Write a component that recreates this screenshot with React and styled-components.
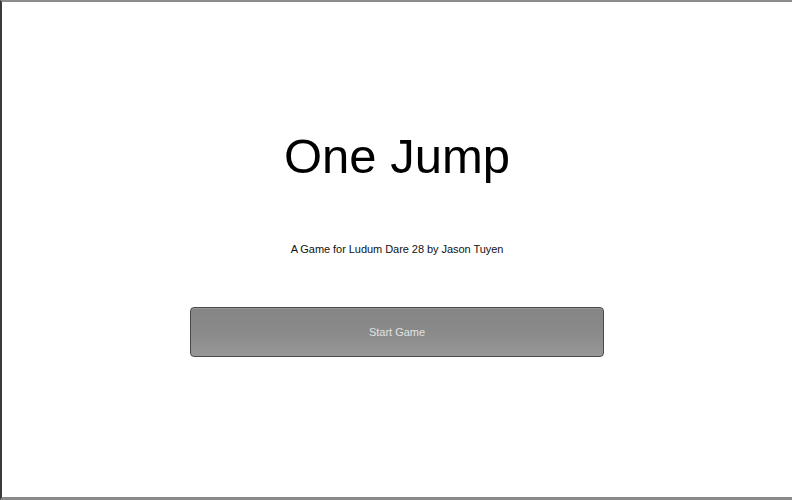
import styled, { createGlobalStyle } from 'styled-components';

const GlobalStyle = createGlobalStyle`
  html, body {
    margin: 0;
    padding: 0;
    background: #ffffff;
  }
  body {
    font-family: "Liberation Sans", Arial, sans-serif;
  }
`;

const Frame = styled.div`
  box-sizing: border-box;
  width: 792px;
  height: 500px;
  background: #ffffff;
  border-top: 2px solid #8c8c8c;
  border-left: 2px solid #3a3a3a;
  border-bottom: 3px solid #8a8a8a;
  display: flex;
  flex-direction: column;
  align-items: center;
  padding-top: 130px;
`;

const Title = styled.h1`
  margin: 0;
  font-size: 49px;
  line-height: 1;
  font-weight: normal;
  color: #000000;
`;

const Credit = styled.p`
  margin: 63px 0 0;
  font-size: 11px;
  line-height: 1;
  letter-spacing: -0.05px;
  color: #111111;
`;

const StartButton = styled.button`
  box-sizing: border-box;
  margin-top: 52px;
  width: 414px;
  height: 50px;
  border: 1px solid #4a4a4a;
  border-radius: 4px;
  background: linear-gradient(to bottom, #858585 0%, #8a8a8a 50%, #979797 100%);
  box-shadow: inset 0 1px 0 rgba(255, 255, 255, 0.15);
  color: #e2e2e2;
  font-family: "Liberation Sans", Arial, sans-serif;
  font-size: 11px;
  cursor: pointer;
`;

export default function App() {
  return (
    <>
      <GlobalStyle />
      <Frame>
        <Title>One Jump</Title>
        <Credit>A Game for Ludum Dare 28 by Jason Tuyen</Credit>
        <StartButton>Start Game</StartButton>
      </Frame>
    </>
  );
}
